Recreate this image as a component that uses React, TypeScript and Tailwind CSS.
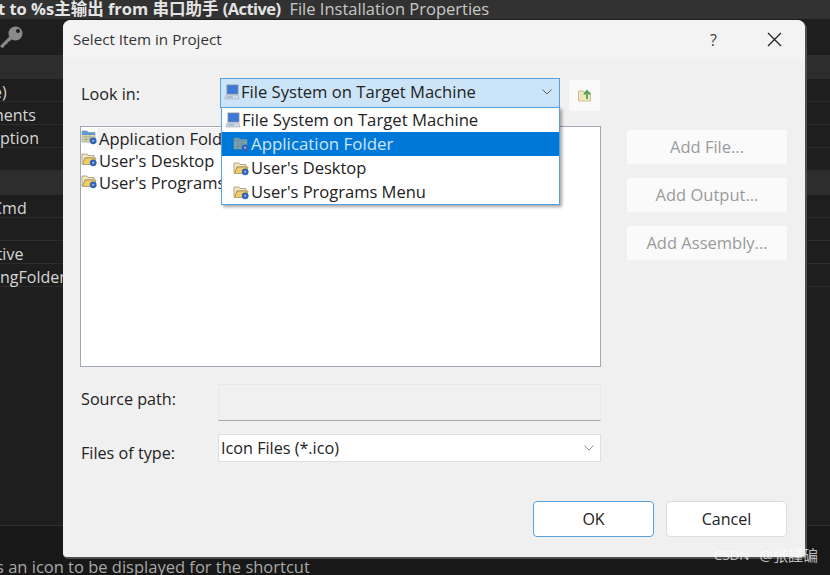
import React from "react";

const font = { fontFamily: '"Open Sans","Noto Sans","Noto Sans CJK SC",sans-serif' };

function Computer() {
  return (
    <svg width="16" height="16" viewBox="0 0 16 16" className="shrink-0">
      <rect x="3" y="1" width="11" height="9" fill="#4a78c8" stroke="#7a8aa8" strokeWidth="0.8" />
      <rect x="4" y="2" width="9" height="7" fill="#3b78d8" />
      <path d="M2 11h12l1 4H1z" fill="#d5dbe4" stroke="#97a1b0" strokeWidth="0.6" />
      <rect x="3" y="12.5" width="6" height="1" fill="#6fa3d8" />
    </svg>
  );
}

function Gear() {
  return (
    <g>
      <circle cx="12.2" cy="11.8" r="3.4" fill="#3563b5" />
      <circle cx="12.2" cy="11.8" r="1" fill="#a9c2ee" />
    </g>
  );
}

function FolderOpen() {
  return (
    <svg width="16" height="16" viewBox="0 0 16 16" className="shrink-0">
      <path d="M1 3h5l1 1.5h6V7H4L2 13H1z" fill="#f1e7c4" stroke="#8a7a4e" strokeWidth="0.6" />
      <path d="M4 7h11l-2.5 6.5H1.6z" fill="#f0cd62" stroke="#8a7a4e" strokeWidth="0.6" />
      <Gear />
    </svg>
  );
}

function FolderApp({ selected }: { selected?: boolean }) {
  return (
    <svg width="16" height="16" viewBox="0 0 16 16" className="shrink-0">
      <path d="M1 2h5l1 1.5h7V13H1z" fill={selected ? "#86a6b2" : "#eadb9c"} stroke={selected ? "#5f8aa8" : "#7a8aa0"} strokeWidth="0.6" />
      <path d="M1 2h5l1 1.5h7V6H1z" fill={selected ? "#6f98aa" : "#5f9ad8"} />
      <path d="M2 8h11M2 10.5h9M5 6v7M9 6v6" stroke={selected ? "#4d7f94" : "#6f93b8"} strokeWidth="0.6" fill="none" />
      <Gear />
    </svg>
  );
}

function Chevron({ light }: { light?: boolean }) {
  return (
    <svg width="12" height="8" viewBox="0 0 12 8" className="shrink-0">
      <path d="M1.5 1.5 6 6l4.5-4.5" fill="none" stroke={light ? "#909090" : "#606060"} strokeWidth="1" />
    </svg>
  );
}

function UpFolder() {
  return (
    <svg width="16" height="16" viewBox="0 0 16 16">
      <path d="M1.5 4h5l1 1.5h6V14h-12z" fill="#f1e7bd" stroke="#b8ab7a" strokeWidth="0.7" />
      <path d="M10 12V5M7 7.5 10 4l3 3.5" fill="none" stroke="#4fa055" strokeWidth="1.8" />
    </svg>
  );
}

function Key() {
  return (
    <svg width="24" height="24" viewBox="0 0 24 24">
      <circle cx="15.5" cy="8.5" r="7" fill="#8a8a8a" />
      <circle cx="18" cy="6" r="2" fill="#1e1e1e" />
      <path d="M11 10 0 21l2 2 2-1 1-2 2-1 1-2 2-1 3-3z" fill="#8a8a8a" />
    </svg>
  );
}

const rows: { text?: string; header?: boolean; cls?: string }[] = [
  { header: true },
  { text: "e)", cls: "ml-[-7px]" },
  { text: "ments", cls: "ml-[-11px]" },
  { text: "ption" },
  {},
  { header: true },
  { text: "Cmd", cls: "ml-[-8px]" },
  {},
  { text: "ctive", cls: "ml-[-11px]" },
  { text: "ngFolder" },
];

function SideButton({ label }: { label: string }) {
  return (
    <button className="h-[34px] w-full rounded-[3px] bg-[#fafafa] text-[16.5px] text-[#9a9a9a]">{label}</button>
  );
}

export default function App() {
  return (
    <div className="relative flex h-[575px] w-[830px] flex-col overflow-hidden bg-[#1e1e1e]" style={font}>
      <div className="flex h-[19px] shrink-0 items-center whitespace-nowrap bg-[#323232] text-[16.5px] text-[#e4e4e4]">
        <span className="ml-[-2px] font-bold">
          t to %s主输出 from 串口助手 <span className="tracking-[-0.6px]">(Active)</span>
        </span>
        <span className="ml-[9px] text-[#c8c8c8]">File Installation Properties</span>
      </div>
      <div className="flex h-[36px] shrink-0 items-center bg-[#1e1e1e]">
        <Key />
      </div>
      <div className="flex h-[470px] shrink-0 flex-col overflow-hidden">
        {rows.map((r, i) => (
          <div
            key={i}
            className={
              "flex shrink-0 items-center whitespace-nowrap border-b border-[#2c2c2c] pt-[3px] text-[16px] text-[#d6d6d6] " +
              (r.header ? "h-[24px] bg-[#2d2d2d]" : "h-[23px] bg-[#1e1e1e]")
            }
          >
            <span className={r.cls}>{r.text}</span>
          </div>
        ))}
      </div>
      <div className="h-[50px] shrink-0 whitespace-nowrap border-t border-[#2f2f2f] bg-[#181818] pt-[32px] text-[16.5px] leading-[18px] text-[#a8a8a8]">
        <span className="ml-[-4px]">s an icon to be displayed for the shortcut</span>
      </div>

      <div className="absolute left-[63px] top-[20px] flex h-[537px] w-[742px] flex-col rounded-t-[8px] rounded-b-[4px] bg-[#f0f0f0] shadow-[1px_1px_0_1px_#4e4e4e]">
        <div className="flex h-[39px] shrink-0 items-center justify-between rounded-t-[8px] bg-[#f3f3f3] pl-[10px] pr-[23px] text-[15.2px] text-[#333]">
          <span>Select Item in Project</span>
          <div className="flex items-center gap-[50px]">
            <span className="text-[16px] text-[#444]">?</span>
            <svg width="15" height="15" viewBox="0 0 15 15">
              <path d="M1 1l13 13M14 1 1 14" stroke="#222" strokeWidth="1.3" />
            </svg>
          </div>
        </div>
        <div className="flex gap-[26px] pl-[17px] pr-[18px]">
          <div className="w-[521px]">
            <div className="mt-[19px] flex h-[30px] items-center">
              <span className="w-[140px] pl-[1px] pt-[2px] text-[16.2px] text-[#222]">Look in:</span>
              <div className="flex h-[30px] w-[340px] items-center gap-[1px] border border-[#5aa0dc] bg-[#cce4f7] pb-[2px] pl-[3px] pr-[6px] text-[16.6px] text-[#222]">
                <Computer />
                <span className="grow whitespace-nowrap">File System on Target Machine</span>
                <Chevron />
              </div>
              <div className="ml-[9px] mt-[4px] flex h-[31px] w-[31px] items-center justify-center rounded-[3px] bg-[#fafafa]">
                <UpFolder />
              </div>
            </div>
            <div className="mt-[18px] h-[241px] border border-[#a0a8b4] bg-white pt-[1px] text-[16.5px] leading-[22px] text-[#222]">
              <div className="flex items-center">
                <span className="mt-[-5px]"><FolderApp /></span>
                <span className="bg-[#f2f2f2] pl-[2px]">Application Folder</span>
              </div>
              <div className="flex items-center">
                <span className="mt-[-5px]"><FolderOpen /></span>
                <span className="pl-[2px]">User's Desktop</span>
              </div>
              <div className="flex items-center">
                <span className="mt-[-5px]"><FolderOpen /></span>
                <span className="pl-[2px]">User's Programs Menu</span>
              </div>
            </div>
            <div className="mt-[17px] flex h-[37px] items-center">
              <span className="mb-[6px] w-[138px] pl-[1px] text-[16.2px] text-[#222]">Source path:</span>
              <div className="h-[37px] w-[383px] border border-[#e8e8e8] border-b-[#a8a8a8] bg-[#f0f0f0]" />
            </div>
            <div className="mt-[13px] flex h-[28px] items-center">
              <span className="mt-[11px] w-[138px] pl-[1px] text-[16.2px] text-[#222]">Files of type:</span>
              <div className="flex h-[28px] w-[383px] items-center justify-between border border-[#e0e0e0] bg-white pl-[2px] pr-[5px] text-[16.2px] text-[#222]">
                <span>Icon Files (*.ico)</span>
                <Chevron light />
              </div>
            </div>
          </div>
          <div className="flex w-[160px] flex-col gap-[14px] pt-[71px]">
            <SideButton label="Add File..." />
            <SideButton label="Add Output..." />
            <SideButton label="Add Assembly..." />
          </div>
        </div>
        <div className="mt-[39px] flex justify-end gap-[12px] pr-[18px]">
          <button className="h-[36px] w-[121px] rounded-[4px] border-[1.5px] border-[#5aa0dc] bg-white text-[16px] text-[#222]">OK</button>
          <button className="h-[36px] w-[121px] rounded-[4px] border border-[#dcdcdc] bg-white text-[16px] text-[#222]">Cancel</button>
        </div>

        <div className="absolute left-[158px] top-[87px] w-[339px] border border-[#5aa0dc] bg-white text-[16.5px] text-[#222] shadow-[2px_2px_3px_rgba(0,0,0,0.35)]">
          <div className="flex h-[24px] items-center gap-[1px] pl-[3px] text-[16.7px]">
            <Computer />
            <span>File System on Target Machine</span>
          </div>
          <div className="flex h-[24px] items-center gap-[2px] bg-[#0078d7] pl-[11px] text-[16.9px] text-[#cfe6fa]">
            <FolderApp selected />
            <span>Application Folder</span>
          </div>
          <div className="flex h-[24px] items-center gap-[2px] pl-[11px]">
            <FolderOpen />
            <span>User's Desktop</span>
          </div>
          <div className="flex h-[24px] items-center gap-[2px] pl-[11px]">
            <FolderOpen />
            <span>User's Programs Menu</span>
          </div>
        </div>
      </div>

      <div className="absolute bottom-[9px] right-[12px] flex items-center gap-[10px] whitespace-nowrap text-[#ffffffb8]">
        <span className="text-[13.5px]">CSDN</span>
        <span className="text-[15px]">@张謹碥</span>
      </div>
    </div>
  );
}
